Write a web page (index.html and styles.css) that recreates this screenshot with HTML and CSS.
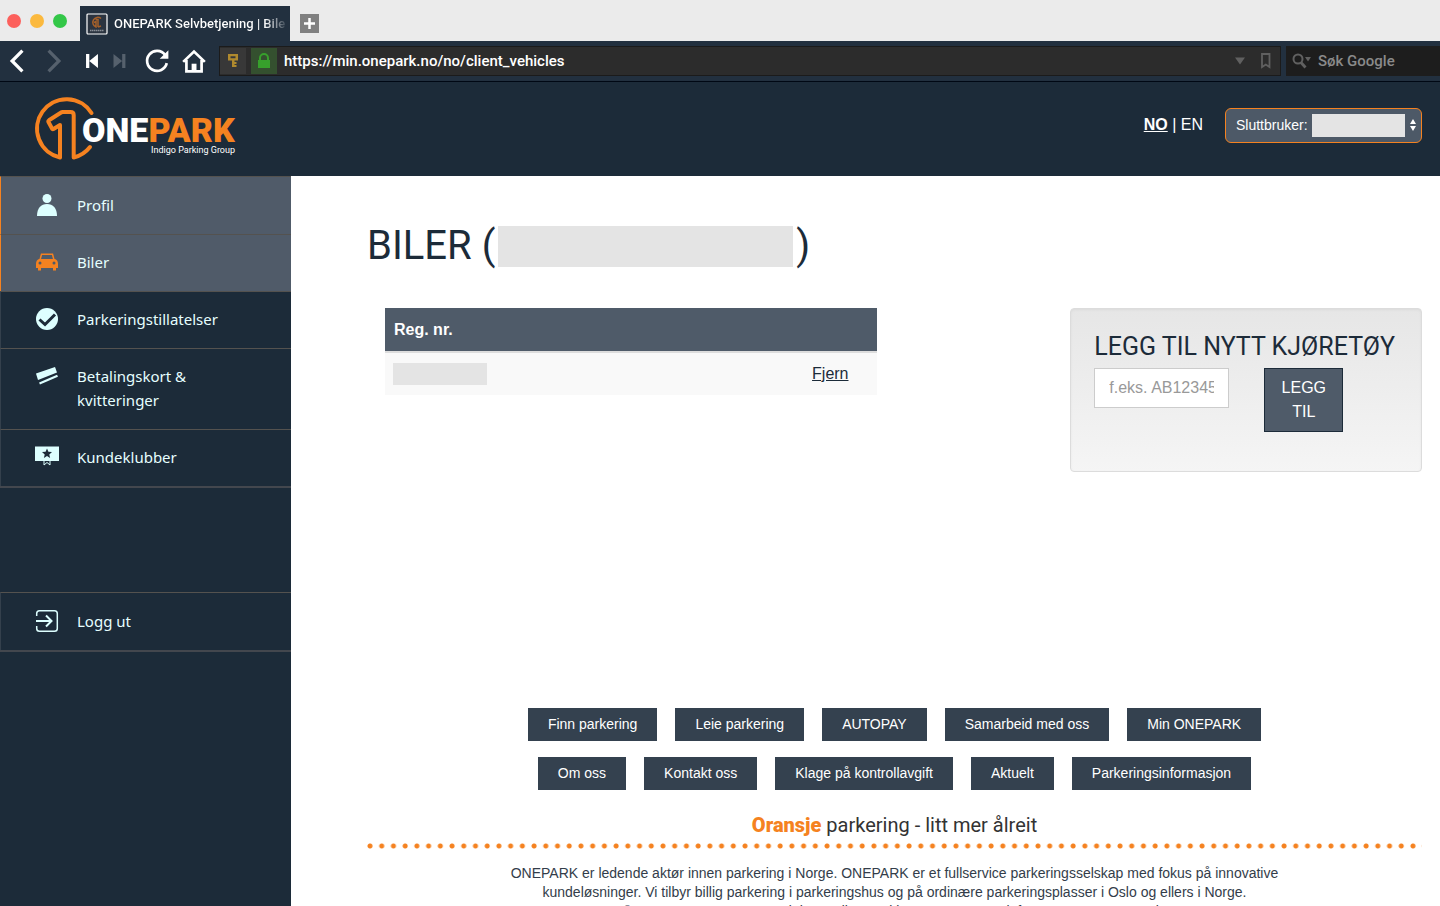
FILE: index.html
```html
<!DOCTYPE html>
<html lang="no">
<head>
<meta charset="utf-8">
<title>ONEPARK Selvbetjening | Biler</title>
<link rel="stylesheet" href="styles.css">
</head>
<body>
<div class="tabstrip">
  <div class="lights"><span class="light light-red"></span><span class="light light-yellow"></span><span class="light light-green"></span></div>
  <div class="tab">
    <svg class="favicon" viewBox="0 0 22 22"><rect x="1" y="1" width="20" height="20" rx="1" fill="#2b3440" stroke="#fff" stroke-width="1.2"/><path d="M15 5.500a5 5 0 1 0-5 8.500V8.500L8 9.500M12 14V6.500H9.500M12 14l3-1" fill="none" stroke="#a5602a" stroke-width="1.500"/><path d="M4 17.500h14" stroke="#8a8f96" stroke-width="1.500" stroke-dasharray="1.500 .5"/></svg>
    <span class="tab-title">ONEPARK Selvbetjening | Biler</span>
  </div>
  <button class="new-tab" aria-label="Ny fane"><svg viewBox="0 0 19 19" width="19" height="19"><path d="M9.500 4v11M4 9.500h11" stroke="#fff" stroke-width="2.500"/></svg></button>
</div>
<div class="toolbar">
  <div class="nav">
    <button aria-label="Tilbake"><svg viewBox="0 0 24 24"><path d="M17 2.500 7.500 12 17 21.500" fill="none" stroke="#fff" stroke-width="3"/></svg></button>
    <button aria-label="Frem"><svg viewBox="0 0 24 24"><path d="M7 2.500 16.500 12 7 21.500" fill="none" stroke="#56616d" stroke-width="3"/></svg></button>
    <div class="nav-skip">
      <button aria-label="Først"><svg viewBox="0 0 24 24"><path d="M6.500 5.500h3v13h-3zM17.500 5.500v13L9.500 12z" fill="#fff"/></svg></button>
      <button aria-label="Sist"><svg viewBox="0 0 24 24"><path d="M14 5.500h3v13h-3zM6 5.500v13L14 12z" fill="#56616d"/></svg></button>
    </div>
    <button aria-label="Last på nytt"><svg viewBox="0 0 24 24"><path d="M19.500 6.500A9.200 9.200 0 1 0 21 14" fill="none" stroke="#fff" stroke-width="2.500"/><path d="M22.500 2v8H14.500z" fill="#fff"/></svg></button>
    <button aria-label="Hjem"><svg viewBox="0 0 24 24"><path d="M2 12.800 12 3.300l10 9.500M5 11v10.500h14V11" fill="none" stroke="#fff" stroke-width="2.500"/><path d="M9.800 14.500h4.500v7H9.800z" fill="#fff"/></svg></button>
  </div>
  <div class="address">
    <span class="badge badge-key"><svg viewBox="0 0 26 26" width="26" height="26"><path d="M8 6h10v6.500h-3.500V14h2v2h-2v1h2v2h-4.500v-6.500H8zM10.500 8.300v1.900h5V8.300z" fill="#b08a2e" fill-rule="evenodd"/></svg></span>
    <span class="badge badge-lock"><svg viewBox="0 0 26 26" width="26" height="26"><path d="M9 13V10a4 4 0 0 1 8 0v3" fill="none" stroke="#37a02c" stroke-width="2"/><path d="M7 12h12v8H7z" fill="#37a02c"/></svg></span>
    <input class="url" type="text" aria-label="Adresse" value="https://min.onepark.no/no/client_vehicles">
    <svg class="address-icons" viewBox="0 0 38 20" width="38" height="20"><path d="M1 6.500h10L6 13.500z" fill="#606060"/><path d="M28 3h7.500v13l-3.700-2.500L28 16z" fill="none" stroke="#606060" stroke-width="1.800"/></svg>
  </div>
  <div class="search">
    <svg viewBox="0 0 20 18" width="20" height="18"><circle cx="6" cy="7" r="4.500" fill="none" stroke="#606060" stroke-width="2"/><path d="m9 10.500 4.500 5" stroke="#606060" stroke-width="2.800"/><path d="M13 5h6l-3 4.500z" fill="#606060"/></svg>
    <input type="text" aria-label="Søk" placeholder="Søk Google">
  </div>
</div>
<header class="site-header">
  <a class="logo" href="#" aria-label="ONEPARK">
    <svg viewBox="0 0 204 68" width="204" height="68">
      <path d="M58.500 18A29.500 29.500 0 1 0 27 62.500V30L20.500 34Q19.500 34.500 19 33.500L15.500 27Q15 26 16 25.300L28.500 17.300 30 17H37.500Q40.700 17 40.700 20V62.500A29.500 29.500 0 0 0 57 52" fill="none" stroke="#f58220" stroke-width="4" stroke-linejoin="round" stroke-linecap="round"/>
      <text class="logo-name" x="49" y="47" fill="#fff">ONE<tspan fill="#f58220">PARK</tspan></text>
      <text class="logo-sub" x="202" y="58" text-anchor="end" fill="#fff">Indigo Parking Group</text>
    </svg>
  </a>
  <div class="header-tools">
    <div class="languages"><a class="current" href="#">NO</a> | <a href="#">EN</a></div>
    <label class="user">Sluttbruker:
      <select><option></option></select>
      <svg viewBox="0 0 8 14" width="8" height="14"><path d="M4 1l3 5H1zM4 13l3-5H1z" fill="#fff"/></svg>
    </label>
  </div>
</header>
<div class="layout">
  <nav class="sidebar">
    <ul class="menu">
      <li><a class="active" href="#"><svg viewBox="0 0 24 24"><circle cx="12" cy="5.500" r="4.500" fill="#dff"/><path d="M2 23c0-8 4-12 10-12s10 4 10 12z" fill="#dff"/></svg><span>Profil</span></a></li>
      <li><a class="active" href="#"><svg viewBox="0 0 24 24"><path d="M5 10 6.500 4.200h11L19 10" fill="none" stroke="#f58220" stroke-width="1.500"/><path d="M4 9h16q3 1 3 5v4h-2v2.500h-3V18H6v2.500H3V18H1v-4q0-4 3-5z" fill="#f58220"/><circle cx="5" cy="13" r="1.500" fill="#505b69"/><circle cx="19" cy="13" r="1.500" fill="#505b69"/></svg><span>Biler</span></a></li>
      <li><a href="#"><svg viewBox="0 0 24 24"><circle cx="12" cy="12" r="11" fill="#dff"/><path d="m4.500 12.500 5.500 5 10-10" fill="none" stroke="#1c2b39" stroke-width="3"/></svg><span>Parkeringstillatelser</span></a></li>
      <li><a href="#"><svg viewBox="0 0 24 24"><path d="M1 9.500 20 3l2 5.500L3 16z" fill="#dff"/><path d="M4.500 19.500 22.500 11.800" stroke="#dff" stroke-width="2.200"/></svg><span>Betalingskort &amp; kvitteringer</span></a></li>
      <li><a href="#"><svg viewBox="0 0 24 24"><path d="M0 1.500h24V16H0z" fill="#dff"/><path d="m12 3.500 1.400 3.300 3.600.3-2.700 2.400.8 3.500-3.100-1.900L8.900 13l.8-3.500L7 7.100l3.600-.3z" fill="#1c2b39"/><path d="M9 15.500V20l3-2.500 3 2.500v-4.500" fill="none" stroke="#dff"/></svg><span>Kundeklubber</span></a></li>
    </ul>
    <ul class="menu">
      <li><a href="#"><svg viewBox="0 0 24 24" fill="none" stroke="#dff" stroke-width="1.500"><path d="M1.700 7V4.500q0-2.800 2.800-2.800h15q2.800 0 2.800 2.800v15q0 2.800-2.800 2.800h-15q-2.800 0-2.800-2.800V17"/><path d="M1 12h15M11 6.500l5.500 5.500-5.500 5.500" stroke-width="2"/></svg><span>Logg ut</span></a></li>
    </ul>
  </nav>
  <main class="content">
    <h1>BILER (<span class="redacted redacted-name"></span>)</h1>
    <div class="columns">
      <div class="vehicles">
        <table>
          <thead><tr><th scope="col">Reg. nr.</th><th></th></tr></thead>
          <tbody><tr><td><span class="redacted redacted-plate"></span></td><td class="action"><a href="#">Fjern</a></td></tr></tbody>
        </table>
      </div>
      <section class="card">
        <h2>LEGG TIL NYTT KJØRETØY</h2>
        <form class="add-form">
          <input type="text" aria-label="Registreringsnummer" placeholder="f.eks. AB12345">
          <button type="button">LEGG TIL</button>
        </form>
      </section>
    </div>
    <footer class="footer">
      <div class="links">
        <a href="#">Finn parkering</a><a href="#">Leie parkering</a><a href="#">AUTOPAY</a><a href="#">Samarbeid med oss</a><a href="#">Min ONEPARK</a>
      </div>
      <div class="links">
        <a href="#">Om oss</a><a href="#">Kontakt oss</a><a href="#">Klage på kontrollavgift</a><a href="#">Aktuelt</a><a href="#">Parkeringsinformasjon</a>
      </div>
      <p class="slogan"><strong>Oransje</strong> parkering - litt mer ålreit</p>
      <div class="dots"></div>
      <p class="about">ONEPARK er ledende aktør innen parkering i Norge. ONEPARK er et fullservice parkeringsselskap med fokus på innovative<br>kundeløsninger. Vi tilbyr billig parkering i parkeringshus og på ordinære parkeringsplasser i Oslo og ellers i Norge.<br>© 2015 ONEPARK AS en del av Indigo Parking Group AS - Telefon: 22242800 - Kontakt</p>
    </footer>
  </main>
</div>
</body>
</html>
```

FILE: styles.css
```css
* { box-sizing: border-box; }

body {
  margin: 0;
  height: 100vh;
  overflow: hidden;
  display: flex;
  flex-direction: column;
  font-family: "Liberation Sans", Arial, sans-serif;
  font-size: 16px;
  color: #1c2b39;
  background: #fff;
}

button, input, select { font: inherit; margin: 0; }
h1, h2, p, ul { margin: 0; padding: 0; }

/* Browser frame */
.tabstrip { display: flex; align-items: flex-end; height: 41px; background: #ebebeb; flex: none; }
.lights { display: flex; gap: 9px; width: 80px; padding: 0 0 13px 7px; }
.light { width: 14px; height: 14px; border-radius: 50%; }
.light-red { background: #fc605c; }
.light-yellow { background: #fbb93e; }
.light-green { background: #33c748; }
.tab {
  display: flex; align-items: center; gap: 6px;
  width: 210px; height: 35px; padding: 0 5px 0 6px;
  background: #22303f;
}
.favicon { width: 22px; height: 22px; flex: none; }
.tab-title {
  flex: 1; overflow: hidden; white-space: nowrap;
  font: 500 13px/20px Roboto, sans-serif;
  color: transparent;
  background: linear-gradient(90deg, #fff 88%, #44505d);
  background-clip: text;
}
.new-tab {
  width: 19px; height: 19px; margin: 0 0 8px 10px; padding: 0;
  border: 0; background: #808080;
}
.new-tab svg { display: block; }

.toolbar {
  display: flex; align-items: center; height: 41px; flex: none;
  background: #22303f; border-bottom: 1px solid #000814;
}
.nav { display: flex; align-items: center; justify-content: space-between; width: 219px; padding: 0 12px 0 4px; }
.nav-skip { display: flex; gap: 2px; }
.nav button { display: flex; width: 26px; padding: 0; border: 0; background: none; }
.nav svg { width: 26px; height: 26px; }
.address {
  display: flex; align-items: center; flex: 1; height: 30px;
  padding: 0 10px 0 0; border: 1px solid #1b1b1b; background: #2c2c2c;
}
.badge { display: flex; width: 26px; height: 26px; margin-right: 5px; }
.badge-key { background: #383838; }
.badge-lock { background: #34502f; }
.url { flex: 1; min-width: 0; padding: 0 2px; border: 0; background: none; color: #fff; font: 500 15px/20px Roboto, sans-serif; }
.address-icons { flex: none; margin-right: -2px; }
.search {
  display: flex; align-items: center; gap: 4px; width: 154px; height: 30px;
  margin-left: 5px; padding-left: 6px; background: #1d1d1d;
}
.search svg { flex: none; }
.search input { width: 110px; border: 0; background: none; font: 500 15px/20px Roboto, sans-serif; }
.search input::placeholder { color: #8a8a8a; opacity: 1; }

/* Site header */
.site-header {
  display: flex; justify-content: space-between; height: 94px; flex: none;
  padding: 13px 18px 0 33px; background: #1c2b39;
}
.logo svg { display: block; }
.logo-name { font: 900 34px Roboto, sans-serif; }
.logo-sub { font: 400 9px Roboto, sans-serif; }
.header-tools { display: flex; align-items: center; gap: 22px; height: 60px; }
.languages { color: #fff; }
.languages a { color: #fff; text-decoration: none; }
.languages .current { font-weight: 700; text-decoration: underline; }
.user {
  display: flex; align-items: center; gap: 4px; width: 197px; height: 35px;
  padding: 0 4px 0 10px; border: 1px solid #f58220; border-radius: 6px;
  background: #4d5967; color: #fff; font-size: 14px; white-space: nowrap;
}
.user select { flex: 1; min-width: 0; height: 23px; appearance: none; border: 0; border-radius: 0; background: #e4e4e4; }

/* Sidebar */
.layout { display: flex; flex: 1; min-height: 0; }
.sidebar { display: flex; flex-direction: column; gap: 104px; width: 291px; flex: none; background: #1c2b39; }
.menu { list-style: none; border-bottom: 2px solid #43474e; }
.menu a {
  display: flex; gap: 18px; padding: 15px 64px 17px 34px;
  border-top: 1px solid #54524f; border-left: 1px solid #34404c;
  color: #e6ffff; text-decoration: none;
  font: 15px/24px "Noto Sans", Verdana, sans-serif;
}
.menu li:first-child a { padding-top: 16px; }
.menu a.active { border-left-color: #f58220; background: #505b69; }
.menu svg { width: 24px; height: 24px; flex: none; }

/* Content */
.content { flex: 1; min-width: 0; padding: 46px 18px 0 76px; }
h1 { display: flex; align-items: center; font: 400 40px/48px Roboto, sans-serif; white-space: pre; }
.redacted { display: inline-block; background: #e4e4e4; }
.redacted-name { width: 295px; height: 41px; margin: 0 3px; }
.redacted-plate { display: block; width: 94px; height: 22px; }
.columns { display: grid; grid-template-columns: minmax(0, 6fr) minmax(0, 2fr) minmax(0, 4fr); margin-top: 38px; align-items: start; }
.vehicles { padding: 0 18px; }
table { width: 100%; border-collapse: collapse; }
th { height: 44px; padding: 0 9px; background: #4f5b69; color: #fff; text-align: left; }
thead { border-bottom: 2px solid #ddd; }
td { height: 43px; padding: 0 8px; background: #f9f9f9; }
.action { width: 140px; padding-right: 28px; text-align: right; }
.action a { color: #1c2b39; }

.card {
  grid-column: 3; height: 164px; padding: 22px 23px;
  border: 1px solid #dcdcdc; border-radius: 4px;
  background: linear-gradient(#e6e6e6, #f5f5f5);
  box-shadow: inset 0 1px 3px rgba(0, 0, 0, .05);
}
h2 { font: 400 25px/32px Roboto, sans-serif; white-space: nowrap; }
.add-form { display: flex; align-items: flex-start; gap: 35px; margin-top: 5px; }
.add-form input { width: 135px; height: 40px; padding: 0 14px; border: 1px solid #ccc; background: #fff; }
.add-form input::placeholder { color: #999; opacity: 1; }
.add-form button {
  width: 79px; padding: 7px 12px; line-height: 24px;
  border: 1px solid #1c2b39; background: #4f5b69; color: #fff;
}

/* Footer */
.footer { margin-top: 236px; text-align: center; }
.links { display: flex; justify-content: center; gap: 18px; margin-bottom: 16px; }
.links a { padding: 0 20px; background: #34414f; color: #fff; font-size: 14px; line-height: 33px; text-decoration: none; }
.slogan { margin-top: 23px; color: #333; font: 400 20px/24px Roboto, sans-serif; }
.slogan strong { color: #f58220; font-weight: 900; }
.dots { height: 6px; margin-top: 6px; background: radial-gradient(circle at 3px 3px, #f58220 2px, transparent 3px) 0 0 / calc(100% / 90) 6px repeat-x; }
.about { margin-top: 15px; font-size: 14px; line-height: 19px; color: #333d4a; }
```
